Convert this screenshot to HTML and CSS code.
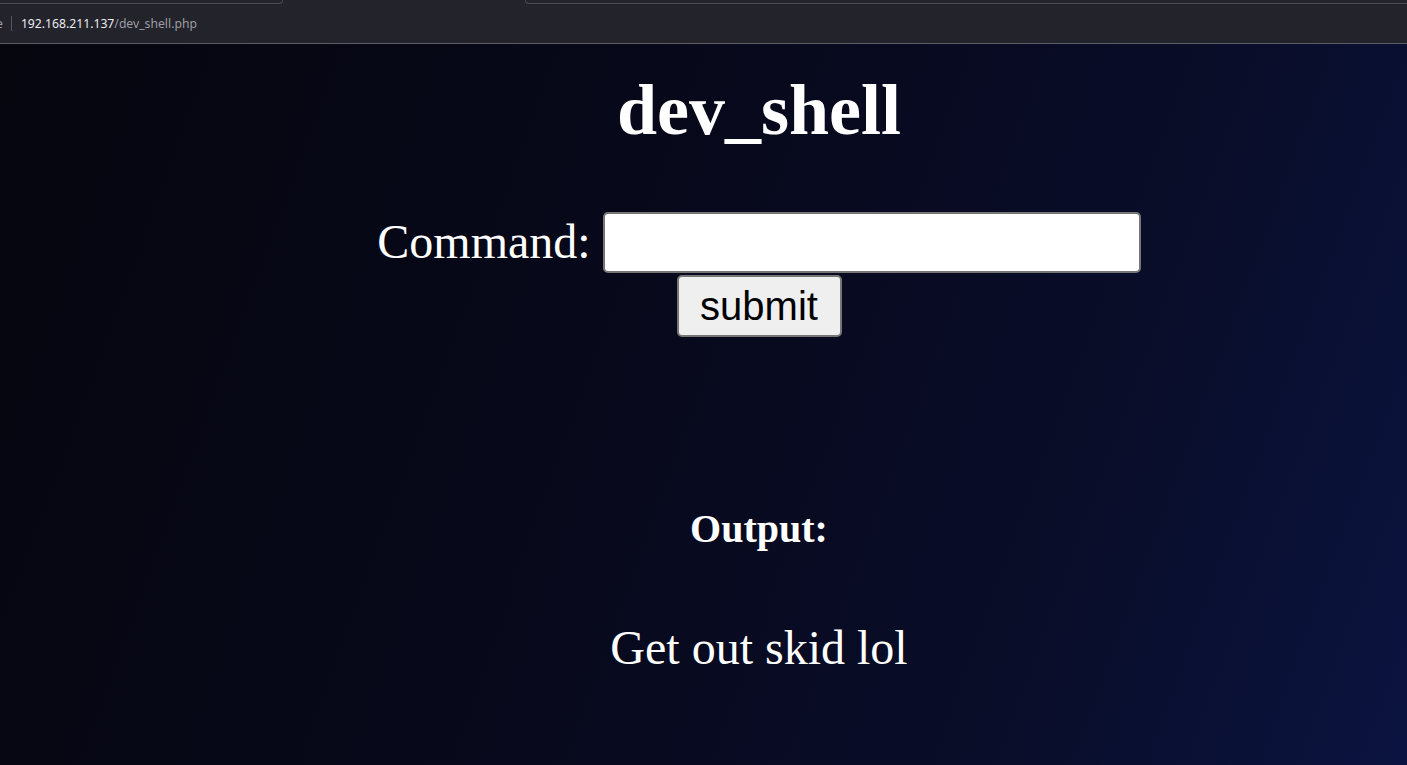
FILE: index.html
```html
<!DOCTYPE html>
<html>
<head>
<meta charset="utf-8">
<title>dev_shell</title>
<link rel="stylesheet" href="styles.css">
</head>
<body>
<div class="chrome">
  <div class="tabstrip">
    <div class="tab-left"></div>
    <div class="tab-active"></div>
    <div class="tab-right"></div>
  </div>
  <div class="urlbar">
    <span class="cut">e</span>
    <span class="sep"></span>
    <span class="url"><span class="host">192.168.211.137</span><span class="path">/dev_shell.php</span></span>
  </div>
</div>
<main class="page">
  <h1 class="title">dev_shell</h1>
  <form class="cmd-form">
    <div class="cmd-row">
      <label class="cmd-label" for="cmd">Command:</label>
      <input class="cmd-input" id="cmd" type="text">
    </div>
    <button class="cmd-submit" type="button">submit</button>
  </form>
  <h2 class="out-title">Output:</h2>
  <p class="out-text">Get out skid lol</p>
</main>
</body>
</html>
```

FILE: styles.css
```css
html, body {
  margin: 0;
  padding: 0;
  height: 100%;
}
body {
  background: linear-gradient(110deg, #06060f 0%, #070819 40%, #090d29 75%, #0b1440 100%);
  color: #ffffff;
  font-family: "Liberation Serif", "Times New Roman", serif;
  overflow: hidden;
}
.chrome {
  height: 43px;
  background: #23232b;
  border-bottom: 1px solid #5c5c64;
  overflow: hidden;
}
.tabstrip {
  display: flex;
  height: 4px;
}
.tab-left {
  width: 283px;
  border-bottom: 1px solid #4c4c55;
  border-right: 1px solid #4c4c55;
  border-bottom-right-radius: 5px;
  box-sizing: border-box;
}
.tab-active {
  width: 242px;
}
.tab-right {
  flex: 1;
  border-bottom: 1px solid #4c4c55;
  border-left: 1px solid #4c4c55;
  border-bottom-left-radius: 5px;
  box-sizing: border-box;
}
.urlbar {
  display: flex;
  align-items: center;
  height: 38px;
  font-family: "Noto Sans", "Open Sans", sans-serif;
  font-size: 12.2px;
}
.cut {
  color: #a0a0a8;
  margin-left: -4px;
}
.sep {
  width: 1px;
  height: 15px;
  background: #55555d;
  margin-left: 8px;
  margin-right: 9px;
}
.host {
  color: #ececef;
}
.path {
  color: #9c9ca3;
}
.page {
  padding-left: 111px;
  text-align: center;
}
.title {
  font-size: 72px;
  line-height: 80px;
  font-weight: bold;
  margin: 26px 0 0;
}
.cmd-form {
  display: flex;
  flex-direction: column;
  align-items: center;
  margin-top: 62px;
}
.cmd-row {
  display: flex;
  align-items: center;
  gap: 12px;
}
.cmd-label {
  font-size: 48px;
  line-height: 55px;
  margin-top: -3px;
}
.cmd-input {
  box-sizing: border-box;
  width: 538px;
  height: 61px;
  background: #ffffff;
  border: 2.5px solid #767676;
  border-radius: 5px;
  margin: 0;
  font-size: 40px;
  font-family: "Liberation Sans", Arial, sans-serif;
}
.cmd-submit {
  box-sizing: border-box;
  width: 165px;
  height: 62px;
  margin-top: 2px;
  background: #efefef;
  border: 2.5px solid #767676;
  border-radius: 5px;
  color: #000000;
  font-family: "Liberation Sans", Arial, sans-serif;
  font-size: 40px;
  line-height: 46px;
  padding: 0;
}
.out-title {
  font-size: 40px;
  line-height: 46px;
  font-weight: bold;
  margin: 169px 0 0;
}
.out-text {
  font-size: 48px;
  line-height: 55px;
  margin: 68px 0 0;
}
```
